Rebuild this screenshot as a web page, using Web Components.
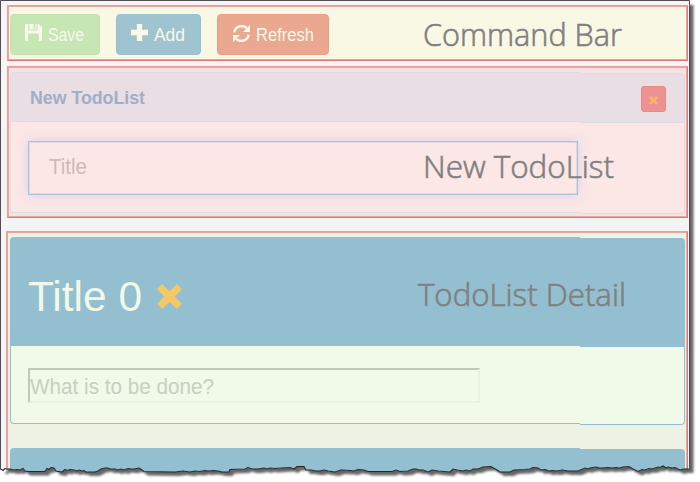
<!DOCTYPE html>
<html lang="en">
<head>
<meta charset="utf-8">
<title>Todo lists</title>
<style>
body{margin:0;background:#fff;font-family:"Liberation Sans",Arial,sans-serif;overflow:hidden}
.save{--bg:#c6e6b4;--edge:#c0e2ae}
.add{--bg:#9fc4d0;--edge:#98bfcd}
.refresh{--bg:#eaa891;--edge:#e99f89}
.new{--head:#e8dee4;--line:#dadde4;--body:#fce7e7;--headh:50px}
.detail{--head:#93bfd0;--line:#93bfd0;--body:#f1f9e8;--headh:109px}
</style>
</head>
<body>
<torn-sheet>
  <region-frame class="bar" style="--bg:#f8f8e4;height:56px" label="Command Bar" lx="423" lw="199" ly="46">
    <div style="display:flex;gap:16px;padding:7px 0 0 1px">
      <action-button class="save" icon="save" style="width:90px"><fit-text text="Save" w="36" size="18"></fit-text></action-button>
      <action-button class="add" icon="plus" style="width:85px"><fit-text text="Add" w="31" size="18"></fit-text></action-button>
      <action-button class="refresh" icon="refresh" style="width:112px"><fit-text text="Refresh" w="58" size="18"></fit-text></action-button>
    </div>
  </region-frame>
  <region-frame style="--bg:#f8e1e1;height:152px;margin-top:5px" label="New TodoList" lx="423" lw="191" ly="111">
    <list-panel class="new" style="height:141px;margin:4px 0 0 1px">
      <div slot="head" style="display:flex;width:100%;height:100%;justify-content:space-between;box-sizing:border-box;padding:0 19px 0 20px">
        <fit-text text="New TodoList" w="115" size="17.6" bold style="color:#a0afc7;margin-top:19px"></fit-text>
        <close-button style="margin-top:14px"></close-button>
      </div>
      <text-field kind="focus" style="margin:19px 0 0 18px"><fit-text text="Title" w="38" size="22"></fit-text></text-field>
    </list-panel>
  </region-frame>
  <region-frame class="last" style="--bg:#ecf3e4;height:250px;margin:13px 0 0 6px;width:682px" label="TodoList Detail" lx="418" lw="208" ly="74">
    <list-panel class="detail" style="height:187px;margin:4px 0 0 2px">
      <div slot="head" style="display:flex;padding:43px 0 0 18px;gap:15px;color:#f1f9e8">
        <fit-text text="Title 0" w="114" size="42"></fit-text><glyph-icon name="cross" size="25" style="color:#f6c765;margin-top:4px"></glyph-icon>
      </div>
      <text-field kind="inset" style="margin:22px 0 0 18px"><fit-text text="What is to be done?" w="184" size="21.5"></fit-text></text-field>
    </list-panel>
    <list-panel class="detail" style="height:32px;margin:24px 0 0 2px;--headh:30px"></list-panel>
  </region-frame>
</torn-sheet>
<script>
const make = (el, html) => { el.attachShadow({mode:"open"}).innerHTML = html; };
const OUTLINE = "M0,468.5 3,470.5 5,468.5 7,469 10,469 14,470 17,469.5 20,470 23,468.5 25,471 28,471.5 45,471.5 47,468.5 49,469.5 51,467.5 54,468 56,471 62,472 65,469.5 67,470.5 70,469.5 74,470 77,471 79,470 82,471 84,470.5 86,472 95,472 98,471 101,469 105,468 108,468 110,469 115,469 118,470 121,469 124,470 128,468.5 131,469 134,469 139,468 142,470 144,471.5 175,472 183,471 190,472 195,471 200,471.5 205,470.5 208,471 214,470.5 218,471 222,472 229,472 230,469.5 245,469 248,467.5 252,469 258,469 264,468 267,469 270,468 275,468.5 282,468 290,467.5 294,469 297,466.5 304,466.5 306,470 311,470 316,471 320,471 324,470 328,471 335,472 341,470 350,470.5 354,471 358,469.5 364,470 368,471.5 392,471.5 396,470 400,471.5 408,471 413,469 416,469 419,470 423,470 428,472 432,470 438,471 450,472 453,469 457,470 463,471 466,470 470,471 473,469 478,469 483,467 491,466.5 497,470 500,472 510,472 514,470 525,469.5 530,469 533,467.5 538,468 541,470 545,469.5 549,471 552,470.5 557,471 562,470 568,471 578,471 585,468 588,469 590,468 596,467 599,468 602,468 608,467.5 612,468 616,467.5 620,468 623,467 629,466.5 633,469 638,471.5 642,469.5 645,470 649,468.5 652,469 658,467 660,467.5 663,466 666,468 668,467 672,468 675,467.5 680,470 684,469 689.5,469";

customElements.define("torn-sheet", class extends HTMLElement {
  connectedCallback(){ make(this, `<style>
    :host{display:block;position:relative;width:700px;height:482px;overflow:hidden}
    svg{position:absolute;inset:0}
    .page{position:relative;box-sizing:border-box;width:690px;height:482px;padding-top:5px;background:linear-gradient(#f8f4f6,#f4f4f4 220px);clip-path:path("${OUTLINE.replace(/\s/g," L")} L690,0 L0,0 Z")}
    ::slotted(*){margin-left:7px}
  </style>
  <svg width="700" height="482"><defs><filter id="b"><feGaussianBlur stdDeviation=".8"/></filter></defs>
    <path d="${OUTLINE} V1 H3 V468Z" transform="translate(4 4)" fill="#666" filter="url(#b)"/></svg>
  <div class="page"><slot></slot></div>
  <svg width="700" height="482"><path d="${OUTLINE}" fill="none" stroke="#24282a" stroke-width="1.1"/><path d="M.5,469V.5H689.5V469" fill="none" stroke="#514d52"/></svg>`); }
});

customElements.define("region-frame", class extends HTMLElement {
  connectedCallback(){ const g = n => this.getAttribute(n); make(this, `<style>
    :host{display:block;position:relative;box-sizing:border-box;width:681px;background:var(--bg);border:1px solid #e99c9a;border-bottom-color:#de7573;border-right-color:#df7b79;box-shadow:inset 0 0 0 1px #eaa5a1}
    .flow{display:flow-root;padding:1px}
    fit-text{position:absolute;left:${g("lx")-this.offsetLeft-1}px;top:${g("ly")-(this.classList.contains("bar")?6:0)-22}px;color:#808080}
  </style><div class="flow"><slot></slot></div><fit-text text="${g("label")}" w="${g("lw")}" size="30.4" light></fit-text>`); }
});

/* A single line of text set to a fixed run width, its baseline on the lower edge of the box. */
customElements.define("fit-text", class extends HTMLElement {
  connectedCallback(){ const g = n => this.getAttribute(n), light = this.hasAttribute("light"), h = Math.round(g("size")*.73); make(this, `<style>
    :host{display:block;flex:none;width:${g("w")}px;height:${h}px}
    svg{display:block;overflow:visible}
    text{fill:currentColor;font-size:${g("size")}px;font-family:${light?'"Open Sans","Noto Sans",sans-serif':'"Liberation Sans",Arial,sans-serif'};font-weight:${this.hasAttribute("bold")?700:light?300:400};${light?"stroke:currentColor;stroke-width:.6px":""}}
  </style><svg width="${g("w")}" height="${h}"><text x="0" y="${h}" textLength="${g("w")}" lengthAdjust="spacingAndGlyphs">${g("text")}</text></svg>`); }
});

const ICONS = {
  save:'<path fill-rule="evenodd" d="M0 0H3V6H12V0H13L16 3V16H13V9H3V16H0ZM4 0H8V4H10V0H11V5H4Z"/>',
  plus:'<path d="M5.500 0h5v5.500H16v5h-5.500V16h-5v-5.500H0v-5h5.500z"/>',
  refresh:'<path d="M1.200 7A7 7 0 0 1 13 3M14.800 9A7 7 0 0 1 3 13" fill="none" stroke="currentColor" stroke-width="2.300"/><path d="M16 0V6.500H9.500ZM0 16V9.500H6.500Z"/>',
  cross:'<path d="M3.300 0L8 4.700L12.700 0L16 3.300L11.300 8L16 12.700L12.700 16L8 11.300L3.300 16L0 12.700L4.700 8L0 3.300Z"/>'
};
customElements.define("glyph-icon", class extends HTMLElement {
  connectedCallback(){ const s = this.getAttribute("size")||16; make(this, `<style>:host{display:block;flex:none;width:${s}px;height:${s}px}svg{display:block}</style>
  <svg width="${s}" height="${s}" viewBox="0 0 16 16" fill="currentColor">${ICONS[this.getAttribute("name")]}</svg>`); }
});

customElements.define("action-button", class extends HTMLElement {
  connectedCallback(){ const r = this.getAttribute("icon")==="refresh"; make(this, `<style>
    :host{display:flex;box-sizing:border-box;height:41px;padding:${r?"10px 0 0 15px":"9px 0 0 14px"};gap:6px;border-radius:4px;background:var(--bg);border:1px solid var(--edge);color:#f8f9e8}
    ::slotted(*){margin-top:${r?3:4}px}
  </style><glyph-icon name="${this.getAttribute("icon")}" size="17"></glyph-icon><slot></slot>`); }
});

customElements.define("close-button", class extends HTMLElement {
  connectedCallback(){ make(this, `<style>
    :host{display:flex;flex:none;box-sizing:border-box;width:25px;height:26px;padding:9px 0 0 7px;border-radius:3px;background:#ec9292;border:1px solid #e78988;color:#fbb36a}
  </style><glyph-icon name="cross" size="9"></glyph-icon>`); }
});

customElements.define("list-panel", class extends HTMLElement {
  connectedCallback(){ const slice = c => `<div class="slice ${c}"><i></i></div>`; make(this, `<style>
    :host{display:grid;width:675px;grid-template-columns:570px 105px}
    .slice{grid-row:1;box-sizing:border-box;border:1px solid var(--line);background:var(--body)}
    .l{grid-column:1;border-right:0;border-radius:4px 0 0 4px}
    .r{grid-column:2;border-left:0;border-radius:0 4px 4px 0;margin:1px 0 -1px}
    i{display:block;height:calc(var(--headh) - 1px);box-sizing:border-box;background:var(--head);border-bottom:1px solid var(--line)}
    .content{grid-row:1;grid-column:1/3}
    .head{height:var(--headh)}
  </style>${slice("l")}${slice("r")}<div class="content"><div class="head"><slot name="head"></slot></div><slot></slot></div>`); }
});

customElements.define("text-field", class extends HTMLElement {
  connectedCallback(){ const f = this.getAttribute("kind")==="focus"; make(this, `<style>
    :host{display:block;box-sizing:border-box;${f
      ?"width:550px;height:54px;padding:16px 0 0 20px;border:1px solid #afc0df;color:#cdbab9;box-shadow:0 0 9px rgba(175,192,225,.5),inset 0 0 0 .5px #c3cbe4"
      :"width:452px;height:35px;padding:8px 0 0 0;border:2px solid #e9f0e1;border-top-color:#c1c9b9;border-left-color:#c1c9b9;color:#c8cfc2"}}
  </style><slot></slot>`); }
});
</script>
</body>
</html>
